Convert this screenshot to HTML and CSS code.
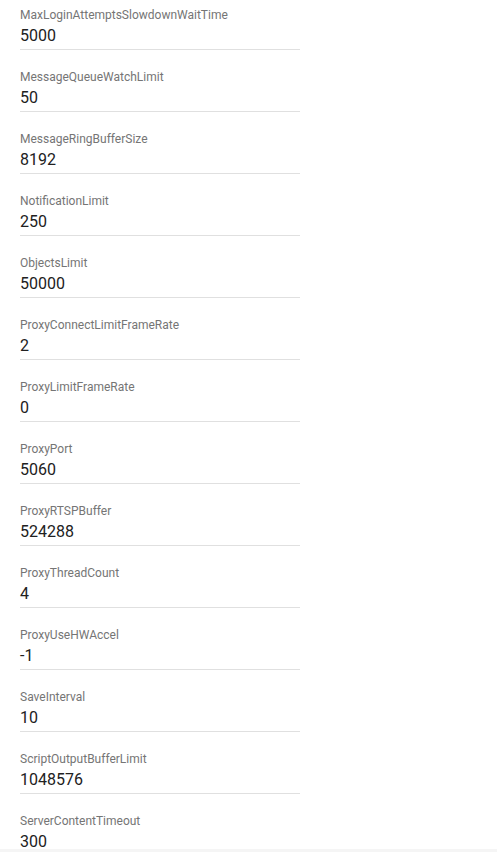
FILE: index.html
```html
<!DOCTYPE html>
<html>
<head>
<meta charset="utf-8">
<link rel="stylesheet" href="styles.css">
</head>
<body>
<div class="list">
  <div class="field"><div class="label">MaxLoginAttemptsSlowdownWaitTime</div><div class="value">5000</div></div>
  <div class="field"><div class="label">MessageQueueWatchLimit</div><div class="value">50</div></div>
  <div class="field"><div class="label">MessageRingBufferSize</div><div class="value">8192</div></div>
  <div class="field"><div class="label">NotificationLimit</div><div class="value">250</div></div>
  <div class="field"><div class="label">ObjectsLimit</div><div class="value">50000</div></div>
  <div class="field"><div class="label">ProxyConnectLimitFrameRate</div><div class="value">2</div></div>
  <div class="field"><div class="label">ProxyLimitFrameRate</div><div class="value">0</div></div>
  <div class="field"><div class="label">ProxyPort</div><div class="value">5060</div></div>
  <div class="field"><div class="label">ProxyRTSPBuffer</div><div class="value">524288</div></div>
  <div class="field"><div class="label">ProxyThreadCount</div><div class="value">4</div></div>
  <div class="field"><div class="label">ProxyUseHWAccel</div><div class="value">-1</div></div>
  <div class="field"><div class="label">SaveInterval</div><div class="value">10</div></div>
  <div class="field"><div class="label">ScriptOutputBufferLimit</div><div class="value">1048576</div></div>
  <div class="field"><div class="label">ServerContentTimeout</div><div class="value">300</div></div>
</div>
<div class="footer"></div>
</body>
</html>
```
FILE: styles.css
```css
html, body {
  margin: 0;
  padding: 0;
  background: #fff;
  font-family: Roboto, "Noto Sans", sans-serif;
}
.list {
  padding-left: 20px;
}
.field {
  width: 280px;
  padding-top: 8px;
  margin-bottom: 12px;
  border-bottom: 1px solid #e0e0e0;
  padding-bottom: 3px;
}
.label {
  font-size: 12px;
  line-height: 14px;
  color: #757575;
}
.value {
  font-size: 16px;
  line-height: 20px;
  margin-top: 4px;
  color: #212121;
}
.footer {
  position: fixed;
  left: 0;
  right: 0;
  bottom: 0;
  height: 3px;
  background: #f5f5f5;
}
```
